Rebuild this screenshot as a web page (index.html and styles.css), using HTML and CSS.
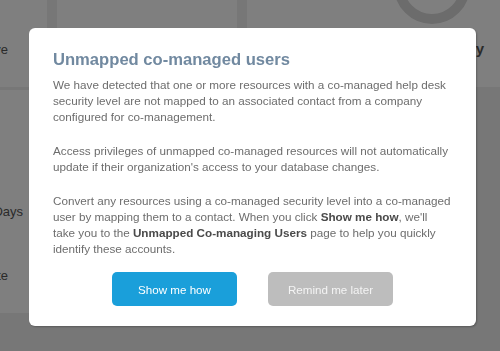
FILE: index.html
```html
<!DOCTYPE html>
<html lang="en">
<head>
  <meta charset="UTF-8">
  <title>Unmapped co-managed users</title>
  <link rel="stylesheet" href="styles.css">
</head>
<body>
  <div class="painel">
    <div class="linha-topo">
      <div class="cartao cartao-a"><span class="rotulo">Resolve</span></div>
      <div class="cartao cartao-b"></div>
      <div class="cartao cartao-c">
        <div class="anel"></div>
        <span class="rotulo rotulo-forte">Activity</span>
      </div>
    </div>
    <div class="linha-meio">
      <div class="cartao cartao-lateral">
        <span class="rotulo">Past Due Days</span>
        <span class="rotulo rotulo-recuo">Complete</span>
      </div>
    </div>
  </div>

  <div class="fundo">
    <div class="modal">
      <h2>Unmapped co-managed users</h2>
      <p>We have detected that one or more resources with a co-managed help desk security level are not mapped to an associated contact from a company configured for co-management.</p>
      <p>Access privileges of unmapped co-managed resources will not automatically update if their organization's access to your database changes.</p>
      <p>Convert any resources using a co-managed security level into a co-managed user by mapping them to a contact. When you click <b>Show me how</b>, we'll<br>take you to the <b>Unmapped Co-managing Users</b> page to help you quickly identify these accounts.</p>
      <div class="acoes">
        <button class="btn btn-azul">Show me how</button>
        <button class="btn btn-cinza">Remind me later</button>
      </div>
    </div>
  </div>
</body>
</html>
```

FILE: styles.css
```css
body {
  margin: 0;
  background-color: #eeeeee;
  font-family: 'Liberation Sans', Arial, sans-serif;
  color: #555;
  overflow: hidden;
}

.painel {
  height: 351px;
  display: flex;
  flex-direction: column;
}

.linha-topo {
  display: flex;
  gap: 10px;
  height: 87px;
}

.cartao {
  background-color: white;
  overflow: hidden;
}

.cartao-a {
  width: 47px;
  display: flex;
  align-items: center;
  justify-content: flex-end;
  padding: 12px 39px 0 0;
  box-sizing: border-box;
}

.cartao-b {
  width: 180px;
}

.cartao-c {
  flex: 1;
  display: flex;
  align-items: center;
  justify-content: flex-end;
  padding-right: 16px;
  position: relative;
}

.anel {
  position: absolute;
  left: 147px;
  top: -52px;
  width: 56px;
  height: 56px;
  border: 10px solid #d8d8d8;
  border-radius: 50%;
}

.rotulo {
  font-size: 13px;
  color: #555;
  white-space: nowrap;
}

.rotulo-forte {
  font-weight: bold;
  font-size: 15px;
  margin-top: 10px;
}

.rotulo-recuo {
  margin-right: 15px;
}

.linha-meio {
  display: flex;
  margin-top: 3px;
  height: 223px;
}

.cartao-lateral {
  width: 29px;
  display: flex;
  flex-direction: column;
  align-items: flex-end;
  padding: 114px 6px 0 0;
  gap: 49px;
  box-sizing: border-box;
}

.fundo {
  position: fixed;
  top: 0;
  left: 0;
  right: 0;
  bottom: 0;
  background-color: rgba(0, 0, 0, 0.5);
  padding: 28px 0 0 29px;
}

.modal {
  width: 447px;
  box-sizing: border-box;
  background-color: white;
  border-radius: 6px;
  padding: 22px 24px 20px;
  box-shadow: 1px 1px 2px rgba(0, 0, 0, 0.25);
}

.modal h2 {
  margin: 0 0 7px;
  font-size: 16.6px;
  line-height: 20px;
  color: #7189a0;
}

.modal p {
  margin: 0 0 18px;
  font-size: 11.7px;
  line-height: 16px;
  color: #6d6d6d;
}

.modal p:last-of-type {
  margin-bottom: 15px;
}

.modal b {
  color: #4a4a4a;
}

.acoes {
  display: flex;
  justify-content: center;
  gap: 31px;
}

.btn {
  width: 125px;
  height: 34px;
  border: none;
  border-radius: 5px;
  font-family: 'Liberation Sans', Arial, sans-serif;
  font-size: 11.6px;
  color: white;
  cursor: pointer;
}

.btn-azul {
  background-color: #1a9fda;
}

.btn-cinza {
  background-color: #bdbdbd;
  color: #f4f4f4;
}
```
